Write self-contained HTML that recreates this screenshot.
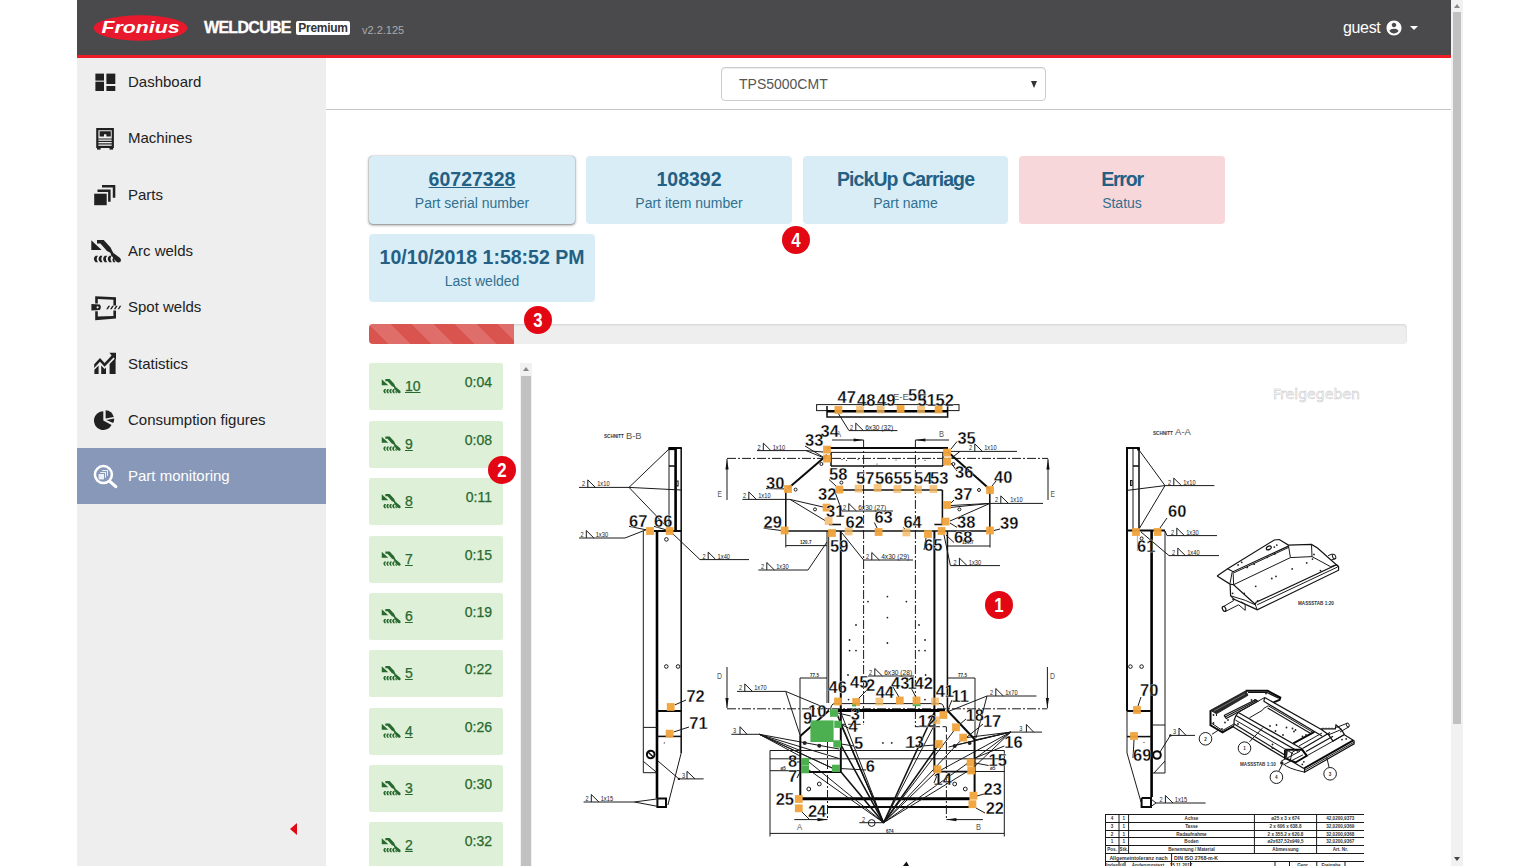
<!DOCTYPE html>
<html lang="en">
<head>
<meta charset="utf-8">
<title>WeldCube Premium - Part monitoring</title>
<style>
*{box-sizing:border-box;margin:0;padding:0}
html,body{width:1540px;height:866px;overflow:hidden;background:#fff;font-family:"Liberation Sans",sans-serif;color:#212121}
#app{position:absolute;left:77px;top:0;width:1386px;height:866px;overflow:hidden;background:#fff}
#hdr{position:absolute;left:0;top:0;width:1374px;height:58px;background:#4a4a4c;border-bottom:3px solid #ee1c25;z-index:5}
#hdr .logo{position:absolute;left:16px;top:15px;width:95px;height:26px}
#hdr .brand{position:absolute;left:127px;top:18px;font-size:16px;font-weight:bold;color:#fff;letter-spacing:-0.7px;line-height:20px;-webkit-text-stroke:.3px #fff}
#hdr .prem{position:absolute;left:219px;top:21px;width:54px;height:14px;background:#fff;color:#333;border-radius:2px;font-size:12px;font-weight:bold;line-height:14px;text-align:center;letter-spacing:-0.3px}
#hdr .ver{position:absolute;left:285px;top:24px;font-size:11px;color:#aaa;line-height:13px}
#hdr .user{position:absolute;left:1266px;top:18px;font-size:16px;color:#fff;line-height:20px;letter-spacing:-.35px}
#hdr svg.acc{position:absolute;left:1308px;top:19px}
#hdr .caret{position:absolute;left:1333px;top:26px;width:0;height:0;border-left:4px solid transparent;border-right:4px solid transparent;border-top:4.5px solid #fff}
#side{position:absolute;left:0;top:54px;width:249px;height:812px;background:#eee}
#side .it{position:absolute;left:0;width:249px;height:56.3px;font-size:15px;line-height:55.800px;color:#212121;padding-left:51px;white-space:nowrap}
#side .it.act{background:#8898b9;color:#fff}
#side .it svg{position:absolute;left:14px;top:16px;width:28px;height:24px}
#side .coll{position:absolute;left:212.800px;top:768.500px;width:0;height:0;border-top:6.7px solid transparent;border-bottom:6.7px solid transparent;border-right:7.5px solid #e30613}
#topbar{position:absolute;left:249px;top:58px;width:1125px;height:52px;border-bottom:1px solid #c4c4c4;background:#fff}
#sel{position:absolute;left:395px;top:9px;width:325px;height:34px;border:1px solid #ccc;border-radius:4px;font-size:14px;color:#555;line-height:32px;padding-left:17px;box-shadow:inset 0 1px 1px rgba(0,0,0,.075)}
#sel:after{content:"";position:absolute;right:8px;top:13px;border-left:3.5px solid transparent;border-right:3.5px solid transparent;border-top:7px solid #333}
.card{position:absolute;height:68px;border-radius:4px;background:#d9edf7;color:#31708f;text-align:center}
.card b{display:block;font-size:19.5px;line-height:22px;margin-top:12px;color:#245f84;white-space:nowrap}
.card span{display:block;font-size:14px;line-height:16px;margin-top:5px;color:#31708f}
.card.err{background:#f8d7da}
.card.first{box-shadow:0 1px 3px rgba(0,0,0,.5),0 0 1px rgba(0,0,0,.45)}
.card.first b{text-decoration:underline}
#prog{position:absolute;left:292px;top:324px;width:1038px;height:19.500px;border-radius:4px;background:#eee;box-shadow:inset 0 1px 2px rgba(0,0,0,.12);overflow:hidden}
#prog i{display:block;width:145px;height:20px;background-color:#d9534f;background-image:linear-gradient(45deg,rgba(255,255,255,.15) 25%,transparent 25%,transparent 50%,rgba(255,255,255,.15) 50%,rgba(255,255,255,.15) 75%,transparent 75%,transparent);background-size:43px 43px}
.badge{position:absolute;width:28px;height:28px;border-radius:50%;background:#e30613;color:#fff;font-weight:bold;font-size:21px;line-height:28px;text-align:center;z-index:4;font-family:"Liberation Sans",sans-serif}
.badge s{display:inline-block;text-decoration:none;transform:scaleX(.8)}
.w{position:absolute;left:292px;width:134px;height:47px;background:#dff0d8;color:#27692f;font-size:14px;border-radius:2px}
.w u{position:absolute;left:36px;top:14px;line-height:18px}
.w em{position:absolute;right:11px;top:10px;font-style:normal;line-height:18px}
.w{-webkit-text-stroke:.25px #27692f}
.w svg{position:absolute;left:12px;top:14px}
#isb{position:absolute;left:443px;top:363px;width:12px;height:503px;background:#f1f1f1}
#isb i{position:absolute;left:1px;top:13px;width:10px;height:490px;background:#c1c1c1}
#isb:before{content:"";position:absolute;left:3px;top:4px;border-left:3px solid transparent;border-right:3px solid transparent;border-bottom:4px solid #888}
#vsb{position:absolute;left:1374px;top:0;width:12px;height:866px;background:#f1f1f1}
#vsb i{position:absolute;left:2px;top:12px;width:8px;height:712px;background:#c1c1c1}
#vsb:before{content:"";position:absolute;left:3px;top:4px;border-left:3px solid transparent;border-right:3px solid transparent;border-bottom:4px solid #888}
#vsb:after{content:"";position:absolute;left:3px;top:857px;border-left:3px solid transparent;border-right:3px solid transparent;border-top:4px solid #444}
#draw,#icons{position:absolute;left:-77px;top:0;width:1540px;height:866px;z-index:1;pointer-events:none}
#icons{z-index:3}
</style>
</head>
<body>
<div id="app">
<svg id="draw" viewBox="0 0 1540 866">
<style>
.t{fill:none;stroke:#1a1a1a;stroke-width:1}
.m{fill:none;stroke:#111;stroke-width:1.55}
.k{fill:none;stroke:#0a0a0a;stroke-width:2}
.x{fill:none;stroke:#000;stroke-width:3}
.k2{fill:none;stroke:#000;stroke-width:2.6}
.i{fill:none;stroke:#111;stroke-width:1.2}
.g{fill:none;stroke:#777;stroke-width:.6}
.dd{stroke-dasharray:9 2 2 2}
.ds{stroke-dasharray:5 2.5}
.fd{fill:#222;stroke:none}
.fa{fill:#111;stroke:none}
.mo{fill:#f0a33a;opacity:.95}
.ml{fill:#f4b660;opacity:.8}
.mg{fill:#4caf50}
.lb{font:bold 16.5px "Liberation Sans",sans-serif;fill:#0a0a0a;stroke:#fff;stroke-width:.35;stroke-opacity:.9}
.ws{font:7.3px "Liberation Sans",sans-serif;fill:#222}
.tn{font:bold 4.6px "Liberation Sans",sans-serif;fill:#333}
.sc{font:9.5px "Liberation Sans",sans-serif;fill:#555}
.tb{font:bold 4.6px "Liberation Sans",sans-serif;fill:#333;text-anchor:middle}
</style>
<text class="tn" x="604" y="438.4">SCHNITT</text>
<text class="sc" x="626" y="438.6" textLength="15.6" lengthAdjust="spacingAndGlyphs">B-B</text>
<path class="t" d="M669 448 L669 531"/>
<path class="k2" d="M675.6 448 L675.6 531"/>
<path class="m" d="M681.2 448 L681.2 753"/>
<path class="k" d="M668.6 448 L681.8 448"/>
<path class="x" d="M668.6 448.6 L675.6 448.6"/>
<path class="m" d="M669 466 L675.6 466"/>
<rect class="t" x="676.5" y="481" width="1.6" height="5"/>
<path class="t" d="M579 487.4 L629 487.4"/>
<path class="t" d="M629 487.4 L669 449"/>
<path class="t" d="M629 487.4 L681 490"/>
<path class="t" d="M629 487.4 L668 528"/>
<text class="ws" x="582" y="486.3" textLength="3.1" lengthAdjust="spacingAndGlyphs">2</text>
<path class="t" d="M587.8 487.4 L587.8 479.9 L595.4 487.4"/>
<text class="ws" x="597.2" y="486.3" textLength="12.4" lengthAdjust="spacingAndGlyphs">1x10</text>
<path class="t" d="M629 526.3 L646 529.8"/>
<path class="t" d="M654 526.3 L666 529.8"/>
<path class="t" d="M579 538 L625 538"/>
<path class="t" d="M625 538 L646 529.8"/>
<text class="ws" x="580.5" y="536.9" textLength="3.1" lengthAdjust="spacingAndGlyphs">2</text>
<path class="t" d="M586.3 538 L586.3 530.5 L593.9 538"/>
<text class="ws" x="595.7" y="536.9" textLength="12.4" lengthAdjust="spacingAndGlyphs">1x30</text>
<path class="k" d="M654 531 L681.2 531"/>
<path class="t" d="M643.3 531 L643.3 772.7"/>
<path class="k2" d="M657 531 L657 798.4"/>
<circle class="t" cx="666.4" cy="539.4" r="1.8"/>
<circle class="t" cx="666.3" cy="666.5" r="1.8"/>
<circle class="t" cx="678" cy="666.5" r="1.8"/>
<path class="t" d="M672 533 L700 559.6 L749 559.6"/>
<text class="ws" x="702.4" y="558.5" textLength="3.1" lengthAdjust="spacingAndGlyphs">2</text>
<path class="t" d="M708.2 559.6 L708.2 552.1 L715.8 559.6"/>
<text class="ws" x="717.6" y="558.5" textLength="12.4" lengthAdjust="spacingAndGlyphs">1x40</text>
<path class="k" d="M657 711 L681.2 711"/>
<path class="m" d="M657 736.4 L681.2 736.4"/>
<path class="t" d="M643.3 727.4 L657 727.4"/>
<path class="t" d="M686 700 L674.6 705"/>
<path class="t" d="M689 727 L673.6 732"/>
<path class="t" d="M681.2 753 L667.9 805"/>
<path class="t" d="M643.3 772.7 L657 772.7"/>
<path class="t" d="M643.3 761.3 L657 772.7"/>
<circle class="k" cx="650.7" cy="754.5" r="3.8"/>
<path class="m" d="M648 752 L653.5 757.2"/>
<path class="k" d="M657.4 798.4 L666 798.4 L666 807 L657.4 807 L657.4 798.4"/>
<path class="t" d="M657.5 760.6 L678.9 778.9 L703.6 778.9"/>
<circle class="fd" cx="678.9" cy="778.9" r="1.2"/>
<text class="ws" x="682" y="777.7" textLength="3.1" lengthAdjust="spacingAndGlyphs">3</text>
<path class="t" d="M687 778.9 L687 771.3 L695 778.9"/>
<path class="t" d="M583.6 802 L634.3 802"/>
<path class="t" d="M634.3 802 L657.4 798.9"/>
<path class="t" d="M634.3 802 L657.4 806.3"/>
<text class="ws" x="585.5" y="800.9" textLength="3.1" lengthAdjust="spacingAndGlyphs">2</text>
<path class="t" d="M591.3 802 L591.3 794.5 L598.9 802"/>
<text class="ws" x="600.7" y="800.9" textLength="12.4" lengthAdjust="spacingAndGlyphs">1x15</text>
<circle class="fd" cx="664.3" cy="742.9" r="0.6"/>
<rect class="t" x="816.6" y="404.6" width="142.4" height="6"/>
<path class="m" d="M827 406 L827 417 L947.6 417 L947.6 406"/>
<path class="k2" d="M827 411.2 L947.6 411.2"/>
<path class="t" d="M838 413 L849 430.6 L897.4 430.6"/>
<text class="ws" x="850" y="429.5" textLength="3.1" lengthAdjust="spacingAndGlyphs">2</text>
<path class="t" d="M855.8 430.6 L855.8 423.1 L863.4 430.6"/>
<text class="ws" x="865.2" y="429.5" textLength="27.9" lengthAdjust="spacingAndGlyphs">6x30 (32)</text>
<text class="sc" x="893" y="400">E-E</text>
<text class="sc" x="836" y="436.6" textLength="5.2" lengthAdjust="spacingAndGlyphs">A</text>
<path class="t" d="M832 440 L863.6 440"/>
<path class="fa" d="M863.6 440 L853.6 441.6 L853.6 438.4 Z"/>
<path class="t dd" d="M863.6 440 L863.6 724"/>
<text class="sc" x="939" y="436.6" textLength="5" lengthAdjust="spacingAndGlyphs">B</text>
<path class="t" d="M915.4 440 L949 440"/>
<path class="fa" d="M915.4 440 L925.4 438.4 L925.4 441.6 Z"/>
<path class="t dd" d="M915.4 440 L915.4 727"/>
<path class="k" d="M827 448 L948 448"/>
<path class="t" d="M831 452.4 L948 452.4"/>
<path class="m" d="M831 452.4 L831 466"/>
<path class="m" d="M831 466 L943 466"/>
<path class="m" d="M943 452.4 L943 466"/>
<path class="t dd" d="M727 458.4 L1048 458.4"/>
<path class="t" d="M727 459 L727 500"/>
<path class="fa" d="M727 459.5 L728.6 469.5 L725.4 469.5 Z"/>
<text class="sc" x="717.5" y="497" textLength="4.4" lengthAdjust="spacingAndGlyphs">E</text>
<path class="t" d="M1048 459 L1048 500"/>
<path class="fa" d="M1048 459.5 L1049.6 469.5 L1046.4 469.5 Z"/>
<text class="sc" x="1050.5" y="497" textLength="4.4" lengthAdjust="spacingAndGlyphs">E</text>
<path class="k" d="M948 452 L990 489.5"/>
<path class="k" d="M827 455 L788 488.6"/>
<path class="m" d="M989.8 490 L989.8 531"/>
<path class="m" d="M785.8 489 L785.8 531"/>
<path class="m" d="M839 490 L942.4 490"/>
<path class="m" d="M942.4 490 L942.4 524.5"/>
<path class="m" d="M829 524.5 L841 524.5"/>
<path class="m" d="M934.4 524.5 L942.4 524.5"/>
<path class="t" d="M835 492 L842 511 L893 511"/>
<text class="ws" x="843" y="509.9" textLength="3.1" lengthAdjust="spacingAndGlyphs">2</text>
<path class="t" d="M848.8 511 L848.8 503.5 L856.4 511"/>
<text class="ws" x="858.2" y="509.9" textLength="27.9" lengthAdjust="spacingAndGlyphs">6x30 (27)</text>
<circle class="t" cx="821.4" cy="464" r="1.5"/>
<circle class="t" cx="953.4" cy="464" r="1.5"/>
<circle class="t" cx="815" cy="509.4" r="1.5"/>
<circle class="t" cx="959.4" cy="509.4" r="1.5"/>
<circle class="t" cx="841.4" cy="482.6" r="1.5"/>
<circle class="t" cx="979" cy="490" r="1.5"/>
<circle class="t" cx="795.6" cy="489.6" r="1.5"/>
<circle class="fd" cx="842" cy="459.5" r="0.6"/>
<circle class="fd" cx="846.5" cy="460.5" r="0.6"/>
<circle class="fd" cx="858" cy="459.5" r="0.6"/>
<circle class="fd" cx="896" cy="460" r="0.6"/>
<circle class="fd" cx="918" cy="459.5" r="0.6"/>
<circle class="fd" cx="925" cy="460.5" r="0.6"/>
<circle class="fd" cx="877" cy="464" r="0.6"/>
<path class="m" d="M785 531 L990 531"/>
<path class="t" d="M960 451.4 L1017 451.4"/>
<path class="t" d="M960 451.4 L951 451.4"/>
<path class="t" d="M960 451.4 L951 458.5"/>
<text class="ws" x="969" y="450.3" textLength="3.1" lengthAdjust="spacingAndGlyphs">2</text>
<path class="t" d="M974.8 451.4 L974.8 443.9 L982.4 451.4"/>
<text class="ws" x="984.2" y="450.3" textLength="12.4" lengthAdjust="spacingAndGlyphs">1x10</text>
<path class="t" d="M990 503.4 L1043 503.4"/>
<path class="t" d="M990 503.4 L951 505.5"/>
<path class="t" d="M990 503.4 L950 521"/>
<path class="t" d="M990 503.4 L949 507.6"/>
<text class="ws" x="995" y="502.3" textLength="3.1" lengthAdjust="spacingAndGlyphs">2</text>
<path class="t" d="M1000.8 503.4 L1000.8 495.9 L1008.4 503.4"/>
<text class="ws" x="1010.2" y="502.3" textLength="12.4" lengthAdjust="spacingAndGlyphs">1x10</text>
<path class="t" d="M757 450.6 L806 450.6"/>
<path class="t" d="M806 450.6 L823 457.5"/>
<path class="t" d="M806 450.6 L823 452"/>
<text class="ws" x="757.5" y="449.5" textLength="3.1" lengthAdjust="spacingAndGlyphs">2</text>
<path class="t" d="M763.3 450.6 L763.3 443.1 L770.9 450.6"/>
<text class="ws" x="772.7" y="449.5" textLength="12.4" lengthAdjust="spacingAndGlyphs">1x10</text>
<path class="t" d="M805 446 L823 457"/>
<path class="t" d="M742.4 499.4 L790 499.4"/>
<path class="t" d="M790 499.4 L823 507"/>
<path class="t" d="M790 499.4 L825 520.5"/>
<text class="ws" x="743" y="498.3" textLength="3.1" lengthAdjust="spacingAndGlyphs">2</text>
<path class="t" d="M748.8 499.4 L748.8 491.9 L756.4 499.4"/>
<text class="ws" x="758.2" y="498.3" textLength="12.4" lengthAdjust="spacingAndGlyphs">1x10</text>
<path class="t" d="M957 441.5 L951 449"/>
<path class="t" d="M957 471 L951 463"/>
<path class="t" d="M996 481 L992 486"/>
<path class="t" d="M763.6 528.2 L781 530.5"/>
<path class="t" d="M766 488.6 L784 488.9"/>
<path class="t" d="M829 479.5 L836 486"/>
<path class="t" d="M954 500 L951 503"/>
<path class="t" d="M957 527.4 L950 523"/>
<path class="t" d="M1000 529 L994 530.5"/>
<path class="t" d="M954 542.5 L946 535"/>
<path class="t" d="M924 550 L926 538"/>
<path class="t" d="M874.4 522.5 L877 528"/>
<path class="t" d="M903.4 527.5 L905 529"/>
<path class="t" d="M827 531 L827 703"/>
<path class="t" d="M828.7 531 L828.7 703"/>
<path class="k" d="M840.8 531 L840.8 772"/>
<path class="k" d="M934.4 531 L934.4 772"/>
<path class="m" d="M947.4 531 L947.4 710"/>
<path class="t" d="M758.4 570 L808 570"/>
<path class="t" d="M808 570 L827 542"/>
<text class="ws" x="761" y="568.9" textLength="3.1" lengthAdjust="spacingAndGlyphs">2</text>
<path class="t" d="M766.8 570 L766.8 562.5 L774.4 570"/>
<text class="ws" x="776.2" y="568.9" textLength="12.4" lengthAdjust="spacingAndGlyphs">1x30</text>
<path class="t" d="M785.8 545.6 L827 545.6"/>
<path class="t" d="M785.8 531 L785.8 547.5"/>
<text class="tn" x="800" y="544">120.7</text>
<path class="t" d="M842 533 L863.6 560 L913 560"/>
<text class="ws" x="866" y="558.9" textLength="3.1" lengthAdjust="spacingAndGlyphs">2</text>
<path class="t" d="M871.8 560 L871.8 552.5 L879.4 560"/>
<text class="ws" x="881.2" y="558.9" textLength="27.9" lengthAdjust="spacingAndGlyphs">4x30 (29)</text>
<path class="t" d="M944 535 L950.4 565.6 L1000 565.6"/>
<text class="ws" x="953.6" y="564.5" textLength="3.1" lengthAdjust="spacingAndGlyphs">2</text>
<path class="t" d="M959.4 565.6 L959.4 558.1 L967 565.6"/>
<text class="ws" x="968.8" y="564.5" textLength="12.4" lengthAdjust="spacingAndGlyphs">1x30</text>
<path class="t" d="M947.6 546 L990 546"/>
<path class="t" d="M990 531 L990 547.5"/>
<text class="tn" x="962" y="544.4" fill="#999">120.7</text>
<path class="t" d="M868 676 L914 676"/>
<text class="ws" x="869" y="674.9" textLength="3.1" lengthAdjust="spacingAndGlyphs">2</text>
<path class="t" d="M874.8 676 L874.8 668.5 L882.4 676"/>
<text class="ws" x="884.2" y="674.9" textLength="27.9" lengthAdjust="spacingAndGlyphs">6x30 (28)</text>
<circle class="fd" cx="868" cy="601.6" r="0.9"/>
<circle class="fd" cx="887.4" cy="596.6" r="0.9"/>
<circle class="fd" cx="906.4" cy="601.6" r="0.9"/>
<circle class="fd" cx="887.4" cy="617.6" r="0.9"/>
<circle class="fd" cx="856" cy="625" r="0.9"/>
<circle class="fd" cx="919" cy="625" r="0.9"/>
<circle class="fd" cx="849.6" cy="640" r="0.9"/>
<circle class="fd" cx="925" cy="640" r="0.9"/>
<circle class="fd" cx="887.4" cy="643" r="0.9"/>
<circle class="fd" cx="849.6" cy="650.6" r="0.9"/>
<circle class="fd" cx="856" cy="650.6" r="0.9"/>
<circle class="fd" cx="919" cy="650.6" r="0.9"/>
<circle class="fd" cx="925" cy="650.6" r="0.9"/>
<circle class="fd" cx="848" cy="675" r="0.9"/>
<circle class="fd" cx="925.6" cy="675" r="0.9"/>
<circle class="fd" cx="882.9" cy="742.9" r="0.9"/>
<circle class="fd" cx="891.7" cy="742.9" r="0.9"/>
<circle class="fd" cx="848.6" cy="699.6" r="0.9"/>
<circle class="fd" cx="925" cy="699.6" r="0.9"/>
<path class="t" d="M800 678 L827 678"/>
<path class="t" d="M800 678 L800 736"/>
<text class="tn" x="810" y="676.6">77.5</text>
<path class="t" d="M947.6 678 L975 678"/>
<path class="t" d="M975 678 L975 739"/>
<text class="tn" x="958" y="676.6">77.5</text>
<text class="sc" x="717" y="678.5" fill="#888" textLength="5" lengthAdjust="spacingAndGlyphs">D</text>
<path class="t" d="M727 667 L727 708"/>
<path class="fa" d="M727 708 L725.4 698 L728.6 698 Z"/>
<path class="t dd" d="M727 708.8 L1047.4 708.8"/>
<path class="t" d="M1047.4 667 L1047.4 708"/>
<path class="fa" d="M1047.4 708 L1045.8 698 L1049 698 Z"/>
<text class="sc" x="1050" y="678.5" fill="#888" textLength="5" lengthAdjust="spacingAndGlyphs">D</text>
<path class="t" d="M737 691.4 L785.7 691.4"/>
<text class="ws" x="739" y="690.3" textLength="3.1" lengthAdjust="spacingAndGlyphs">2</text>
<path class="t" d="M744.8 691.4 L744.8 683.9 L752.4 691.4"/>
<text class="ws" x="754.2" y="690.3" textLength="12.4" lengthAdjust="spacingAndGlyphs">1x70</text>
<path class="t" d="M785.7 691.4 L800 735"/>
<path class="t" d="M785.7 691.4 L829 709.5"/>
<path class="t" d="M987 696 L1036.4 696"/>
<text class="ws" x="990" y="694.9" textLength="3.1" lengthAdjust="spacingAndGlyphs">2</text>
<path class="t" d="M995.8 696 L995.8 688.5 L1003.4 696"/>
<text class="ws" x="1005.2" y="694.9" textLength="12.4" lengthAdjust="spacingAndGlyphs">1x70</text>
<path class="t" d="M987 696 L947 712"/>
<path class="t" d="M987 696 L976 738"/>
<path class="t" d="M731.4 734.3 L759.3 734.3"/>
<text class="ws" x="733" y="733.2" textLength="3.1" lengthAdjust="spacingAndGlyphs">3</text>
<path class="t" d="M740 734.3 L740 726.7 L747 734.3"/>
<path class="t" d="M759.3 734.3 L800.7 750.7"/>
<path class="t" d="M759.3 734.3 L839 749"/>
<path class="t" d="M759.3 734.3 L839.3 758.6"/>
<path class="t" d="M759.3 734.3 L800.7 756.4"/>
<path class="t" d="M759.3 734.3 L832 768"/>
<path class="t" d="M759.3 734.3 L841 772"/>
<path class="t" d="M1010.7 732.1 L1042 732.1"/>
<text class="ws" x="1019.3" y="731" textLength="3.1" lengthAdjust="spacingAndGlyphs">3</text>
<path class="t" d="M1026.4 732.1 L1026.4 724.5 L1033.6 732.1"/>
<path class="t" d="M1010.7 732.1 L975 740"/>
<path class="t" d="M1010.7 732.1 L975 758.6"/>
<path class="t" d="M1010.7 732.1 L948.6 747"/>
<path class="t" d="M1010.7 732.1 L971 770"/>
<path class="t" d="M1010.7 732.1 L941 770"/>
<path class="t" d="M1010.7 732.1 L963 738"/>
<path class="t" d="M1010.7 732.1 L956 745"/>
<path class="t" d="M830.7 710 Q830.7 703.6 835 703.6 L940 703.6 Q944 703.6 944 710"/>
<path class="x" d="M838 710.4 L945 710.4"/>
<path class="k" d="M800.3 736 L829 710.4"/>
<path class="k" d="M947 710 L974.6 739.3"/>
<path class="k" d="M800.3 736 L800.3 795.6"/>
<path class="k" d="M974.6 739 L974.6 792"/>
<path class="k" d="M800.3 772 L841 772"/>
<path class="m" d="M934.4 771.6 L974.6 771.6"/>
<path class="t" d="M770 836.5 L770 750.5 L1004.3 750.5 L1004.3 836.5"/>
<path class="t" d="M770 758.8 L1004.3 758.8"/>
<path class="t" d="M770 770.7 L800 770.7"/>
<path class="t" d="M975 771.5 L1004.3 771.5"/>
<path class="t" d="M770 833.4 L1004.3 833.4"/>
<text class="tn" x="886" y="832.6">674</text>
<text class="tn" x="780.5" y="769.5">ø5</text>
<text class="tn" x="990" y="769.5" fill="#999">ø5</text>
<path class="x" d="M802 798.8 L969.7 798.8"/>
<path class="k" d="M828 807 L969 807"/>
<path class="t dd" d="M827.5 745 L827.5 819.6"/>
<path class="t" d="M794.3 819.6 L827.5 819.6"/>
<path class="fa" d="M827.5 819.6 L817.5 821.2 L817.5 818 Z"/>
<text class="sc" x="797" y="830" textLength="5.2" lengthAdjust="spacingAndGlyphs">A</text>
<path class="t dd" d="M946.4 745 L946.4 819.6"/>
<path class="t" d="M946.4 819.6 L982.9 819.6"/>
<path class="fa" d="M946.4 819.6 L956.4 818 L956.4 821.2 Z"/>
<text class="sc" x="976" y="830" textLength="5" lengthAdjust="spacingAndGlyphs">B</text>
<path class="t ds" d="M840.7 724.3 L863.6 724.3"/>
<path class="t ds" d="M915 726.7 L935 726.7"/>
<path class="t ds" d="M946.4 727 L946.4 745"/>
<path class="t ds" d="M935 726.7 L946.4 726.7"/>
<path class="t ds" d="M827.5 727 L827.5 745"/>
<circle class="fd" cx="804.7" cy="742.9" r="2"/>
<circle class="fd" cx="819.3" cy="745.7" r="2"/>
<circle class="fd" cx="954.7" cy="746" r="2"/>
<circle class="fd" cx="969.6" cy="742.9" r="2"/>
<circle class="t" cx="819.3" cy="784" r="1.9"/>
<circle class="t" cx="808.8" cy="789" r="1.9"/>
<circle class="t" cx="954.7" cy="784" r="1.9"/>
<circle class="t" cx="965.3" cy="789" r="1.9"/>
<path class="t" d="M859.3 822.7 L883.6 822.7"/>
<text class="ws" x="862" y="821.5" textLength="3.1" lengthAdjust="spacingAndGlyphs">2</text>
<circle class="t" cx="871.7" cy="823" r="3.4"/>
<path class="t" d="M883.6 822.7 L841 713"/>
<path class="t" d="M883.6 822.7 L841 725"/>
<path class="m" d="M883.6 822.7 L841 745"/>
<path class="m" d="M883.6 822.7 L841 772"/>
<path class="t" d="M883.6 822.7 L809 762"/>
<path class="t" d="M883.6 822.7 L809 770"/>
<path class="m" d="M883.6 822.7 L836 712"/>
<path class="m" d="M883.6 822.7 L934 713"/>
<path class="t" d="M883.6 822.7 L937 720"/>
<path class="m" d="M883.6 822.7 L939 744"/>
<path class="t" d="M883.6 822.7 L938 770"/>
<path class="t" d="M883.6 822.7 L956 728"/>
<path class="t" d="M883.6 822.7 L963 738"/>
<path class="t" d="M883.6 822.7 L968 763"/>
<path class="t" d="M883.6 822.7 L968 771"/>
<path class="t" d="M976 808 L985 813"/>
<path class="t" d="M977 796 L984 794"/>
<path class="t" d="M802 812 L809 819"/>
<path class="t" d="M850.7 716 L838 713"/>
<path class="t" d="M848.6 728 L841 724.5"/>
<path class="t" d="M854 746 L841 744"/>
<path class="t" d="M866 770 L840 768.5"/>
<path class="t" d="M797 762 L801 762"/>
<path class="t" d="M797 778 L801 770"/>
<path class="t" d="M811 722 L815 726"/>
<path class="t" d="M905.7 747.2 L935 745"/>
<path class="t" d="M988.6 765.5 L975 763"/>
<path class="t" d="M1004.3 746 L975 758"/>
<path class="t" d="M983 724 L967 737"/>
<path class="t" d="M966 719 L959 725"/>
<path class="t" d="M934 783 L938 773"/>
<path class="t" d="M952 700 L947 712"/>
<path class="t" d="M868 689 L858 699"/>
<path class="t" d="M893 687 L899 697"/>
<path class="t" d="M911 688 L916 697"/>
<path class="fa" d="M903 866 L906.5 861.5 L909 866Z"/>
<text class="tn" x="1153" y="435">SCHNITT</text>
<text class="sc" x="1175" y="435.2" textLength="16" lengthAdjust="spacingAndGlyphs">A-A</text>
<path class="k" d="M1127 447.5 L1127 711"/>
<path class="t" d="M1133 448 L1133 531"/>
<path class="m" d="M1139 448 L1139 531"/>
<path class="k" d="M1126 448 L1139.6 448"/>
<path class="x" d="M1137.2 449 L1139.8 449"/>
<path class="m" d="M1133 466 L1139 466"/>
<rect class="t" x="1130.5" y="480.5" width="1.6" height="5"/>
<path class="t" d="M1165 485.6 L1214.4 485.6"/>
<path class="t" d="M1165 485.6 L1139 450"/>
<path class="t" d="M1165 485.6 L1127 490.4"/>
<path class="t" d="M1165 485.6 L1139 529"/>
<text class="ws" x="1168" y="484.5" textLength="3.1" lengthAdjust="spacingAndGlyphs">2</text>
<path class="t" d="M1173.8 485.6 L1173.8 478.1 L1181.4 485.6"/>
<text class="ws" x="1183.2" y="484.5" textLength="12.4" lengthAdjust="spacingAndGlyphs">1x10</text>
<path class="t" d="M1167 518 L1160 528"/>
<path class="k" d="M1127 530.6 L1165 530.6"/>
<path class="t" d="M1165 531 L1167 535.6 L1217 535.6"/>
<text class="ws" x="1171" y="534.5" textLength="3.1" lengthAdjust="spacingAndGlyphs">2</text>
<path class="t" d="M1176.8 535.6 L1176.8 528.1 L1184.4 535.6"/>
<text class="ws" x="1186.2" y="534.5" textLength="12.4" lengthAdjust="spacingAndGlyphs">1x30</text>
<path class="t" d="M1141 532 L1169 555.6 L1219 555.6"/>
<text class="ws" x="1172" y="554.5" textLength="3.1" lengthAdjust="spacingAndGlyphs">2</text>
<path class="t" d="M1177.8 555.6 L1177.8 548.1 L1185.4 555.6"/>
<text class="ws" x="1187.2" y="554.5" textLength="12.4" lengthAdjust="spacingAndGlyphs">1x40</text>
<circle class="t" cx="1141.6" cy="538.4" r="1.5"/>
<path class="g" d="M1137.4 536 L1137.4 551"/>
<path class="k2" d="M1151.6 531 L1151.6 797"/>
<path class="t" d="M1165 531 L1165 773"/>
<circle class="t" cx="1130.4" cy="666.6" r="1.8"/>
<circle class="t" cx="1141.6" cy="666.6" r="1.8"/>
<path class="t" d="M1141 697 L1138 706"/>
<path class="k" d="M1127 711 L1151.6 711"/>
<path class="m" d="M1127 736.6 L1151.6 736.6"/>
<path class="t" d="M1134 740 L1133 758"/>
<path class="t" d="M1127 711 L1127 753"/>
<path class="t" d="M1127 753 L1141 802"/>
<path class="t" d="M1151.6 725 L1165 725"/>
<path class="t" d="M1151.6 773 L1165 773"/>
<path class="t" d="M1165 761 L1154 773"/>
<circle class="k" cx="1157" cy="755" r="3.8"/>
<path class="t" d="M1160 752 L1170.4 735.4 L1195 735.4"/>
<circle class="fd" cx="1170.4" cy="735.4" r="1.2"/>
<text class="ws" x="1173" y="734.2" textLength="3.1" lengthAdjust="spacingAndGlyphs">3</text>
<path class="t" d="M1179 735.4 L1179 728 L1186 735.4"/>
<path class="k" d="M1141.6 798 L1151 798 L1151 807 L1141.6 807 L1141.6 798"/>
<path class="t" d="M1151 799 L1156 803 L1151 806.5"/>
<path class="t" d="M1156 803 L1205.6 803"/>
<text class="ws" x="1159.6" y="801.9" textLength="3.1" lengthAdjust="spacingAndGlyphs">2</text>
<path class="t" d="M1165.4 803 L1165.4 795.5 L1173 803"/>
<text class="ws" x="1174.8" y="801.9" textLength="12.4" lengthAdjust="spacingAndGlyphs">1x15</text>
<circle class="fd" cx="1144" cy="742.5" r="0.6"/>
<text x="1273" y="399" textLength="87" lengthAdjust="spacingAndGlyphs" style="font:13.5px 'DejaVu Sans',sans-serif;fill:#fff;stroke:#c6c6c6;stroke-width:.5">Freigegeben</text>
<path class="i" d="M1217.1 576 L1227.6 568.7 L1274.3 540 L1279.3 539.5 L1288.4 545.1 L1311.5 544.4 L1317.5 548.1 L1338.6 566.7 L1338.6 570.2 L1257.2 609.9 L1253.2 607.9 L1234.1 599.3 L1230.6 595.8 L1230.1 584.2 L1217.1 576"/>
<path class="i" d="M1227.6 568.7 L1233.1 571.7 L1288.4 546.1"/>
<path class="t" d="M1234.1 572.7 L1288.9 547.3"/>
<path class="t" d="M1233.1 571.7 L1233.6 584.7 L1290.4 557.6 L1288.4 545.1"/>
<path class="t" d="M1290.4 557.6 L1312 556.6 L1311.5 544.4"/>
<path class="t" d="M1312 556.6 L1330.6 566.7 L1336.6 564.7"/>
<path class="i" d="M1230.1 584.2 L1233.6 584.7 L1255.2 604.3 L1256.2 602.3 L1336.6 564.7 L1338.6 566.7"/>
<path class="t" d="M1257.2 604.8 L1337.6 567"/>
<path class="t" d="M1255.2 604.3 L1257.2 609.9"/>
<path class="t" d="M1230.6 595.8 L1245.2 600.3 L1255.2 604.8"/>
<path class="t" d="M1230.1 583.2 L1232.1 572.2"/>
<path class="t" d="M1223.6 606.5 L1234.1 600.3"/>
<path class="t" d="M1225.1 611.6 L1238.7 604.8"/>
<path class="t" d="M1238.7 604.8 L1245.2 610.4 L1245.2 604.3 L1241.2 601.8"/>
<path class="t" d="M1232.1 599.3 L1235.1 599.3"/>
<ellipse class="i" cx="1224.1" cy="608.9" rx="1.6" ry="2.6" transform="rotate(-25 1224.1 608.9)"/>
<path class="t" d="M1328.1 555.6 L1332.6 553.9"/>
<path class="t" d="M1331.1 560.1 L1335.6 558.6"/>
<ellipse class="t" cx="1334.1" cy="556.6" rx="1.5" ry="2.4" transform="rotate(-25 1334.1 556.6)"/>
<ellipse class="i" cx="1268.8" cy="547.9" rx="2.6" ry="1.7" transform="rotate(-28 1268.8 547.9)"/>
<circle class="fd" cx="1255.7" cy="586.3" r="0.9"/>
<circle class="fd" cx="1271.8" cy="578.5" r="0.9"/>
<circle class="fd" cx="1276" cy="576.4" r="0.9"/>
<circle class="fd" cx="1292.2" cy="568.9" r="0.9"/>
<circle class="fd" cx="1306.7" cy="562.9" r="0.9"/>
<circle class="fd" cx="1320.5" cy="570.7" r="0.9"/>
<circle class="fd" cx="1257.7" cy="600.8" r="0.9"/>
<circle class="fd" cx="1238.1" cy="565" r="0.9"/>
<circle class="fd" cx="1241.7" cy="562.3" r="0.9"/>
<circle class="fd" cx="1274.3" cy="547.1" r="0.9"/>
<circle class="fd" cx="1276.8" cy="545.1" r="0.9"/>
<circle class="fd" cx="1244.2" cy="593.3" r="0.9"/>
<circle class="fd" cx="1232.6" cy="593.3" r="0.9"/>
<circle class="fd" cx="1314" cy="554.4" r="0.9"/>
<circle class="fd" cx="1312.5" cy="559.1" r="0.9"/>
<circle class="fd" cx="1247.2" cy="567.4" r="0.9"/>
<circle class="fd" cx="1254.2" cy="564.2" r="0.9"/>
<circle class="fd" cx="1267.3" cy="557.3" r="0.9"/>
<circle class="fd" cx="1274.8" cy="553.9" r="0.9"/>
<text class="tn" x="1298" y="605.4">MASSSTAB 1:20</text>
<path d="M1210.5 710.3 L1245.8 690.8 L1248 695.3 L1216.5 713.8 Z" fill="#2a2a2a" stroke="#111" stroke-width=".8"/>
<path class="g" d="M1213 711.6 L1246.6 693" style="stroke:#bbb;stroke-width:.5"/>
<path class="k" d="M1210.5 710.3 L1210.5 725.3 L1222.5 732.4 L1233.8 726"/>
<path class="t" d="M1211.3 723 L1222.5 730.5 L1233 724.5"/>
<path class="t" d="M1216.5 713.8 L1216.5 716"/>
<path class="k" d="M1245.8 690.8 L1267.6 690.8 L1280.3 697.5 L1279.6 699.8 L1273.6 702.4"/>
<path class="i" d="M1248 692.3 L1266.5 692.3 L1278.8 698.3"/>
<path class="i" d="M1224 715.5 L1255.6 699.8 L1257.8 701.3 L1226.3 718.5 L1224 715.5"/>
<path class="i" d="M1225 717 L1256.7 700.5"/>
<path class="i" d="M1238.3 712.5 L1302.9 749.3"/>
<path class="i" d="M1236 715.5 L1298.3 751.6"/>
<path class="t" d="M1235.3 720 L1293.1 753.8"/>
<path class="i" d="M1233.8 723.8 L1284.8 755"/>
<path class="i" d="M1233 726.8 L1285 758.3"/>
<path class="i" d="M1238.3 712.5 L1236 715.5 L1234.2 720 L1233.8 726"/>
<path class="i" d="M1264.6 697.5 L1320.5 729"/>
<path class="i" d="M1263.8 701.3 L1322 736"/>
<path class="t" d="M1268.3 705.8 L1313.8 732.8"/>
<path class="i" d="M1267.6 708 L1311.6 734"/>
<path class="i" d="M1264.6 697.5 L1263.8 701.3"/>
<path class="t" d="M1264.6 697.5 L1238.3 712.5"/>
<path class="t" d="M1268.3 705.8 L1263.8 708.3 L1262.3 710.3 L1249.5 717.8"/>
<path class="k" d="M1293.3 743.4 L1314.3 731.8"/>
<path class="i" d="M1303 748.3 L1330 732.5"/>
<path class="i" d="M1306 751.6 L1333 736.3"/>
<path class="t" d="M1299 746 L1322 733"/>
<path class="k" d="M1285 749.8 L1302.3 749.8 L1306.8 755.8 L1295.5 762.5 L1290.3 760.3 L1285 758 L1285 749.8"/>
<path class="t" d="M1281.3 761 L1300 751.3"/>
<path class="t" d="M1283.5 764.8 L1303 754.8"/>
<path class="t" d="M1290.3 760.3 L1292 752.5 L1296 750"/>
<circle class="fd" cx="1281.8" cy="762.9" r="1.7"/>
<path d="M1285 749.800 L1288 749.800 L1287 757 L1285 758 Z" fill="#222"/>
<path class="i" d="M1320.3 728.8 L1335.3 728.8 L1336 725 L1341.3 729.5 L1344.3 734.4 L1333 741.1 L1328.6 734.8 L1320.3 728.8"/>
<path class="t" d="M1328.6 734.8 L1341.3 729.5"/>
<path class="t" d="M1336.3 727.5 L1346.8 723.4"/>
<path class="t" d="M1340 732 L1349 726.8"/>
<ellipse class="t" cx="1347.8" cy="725" rx="1.3" ry="2" transform="rotate(-28 1347.8 725)"/>
<circle class="fd" cx="1323" cy="728" r="0.6"/>
<circle class="fd" cx="1326" cy="728" r="0.6"/>
<circle class="fd" cx="1329" cy="728" r="0.6"/>
<circle class="fd" cx="1332" cy="728" r="0.6"/>
<path class="i" d="M1344.3 734.8 L1354.1 740.8 L1354.1 743.8 L1304.5 772.3 L1304.5 768.5"/>
<path class="k" d="M1353.3 740.4 L1303.8 768.5"/>
<path class="t" d="M1354.1 742.2 L1304.5 770.3"/>
<path class="i" d="M1290.3 760.3 L1303.8 768.5"/>
<path class="t" d="M1283.5 764 Q1288 768.5 1304 772"/>
<path class="t" d="M1306.8 755.8 L1344.3 734.8"/>
<circle class="fd" cx="1342" cy="739.6" r="0.9"/>
<circle class="fd" cx="1346.2" cy="738.9" r="0.9"/>
<circle class="fd" cx="1303.8" cy="761.8" r="0.9"/>
<circle class="fd" cx="1302.3" cy="764.4" r="0.9"/>
<circle class="fd" cx="1213.5" cy="715" r="0.9"/>
<circle class="fd" cx="1213.5" cy="723" r="0.9"/>
<circle class="fd" cx="1225" cy="722.5" r="0.9"/>
<circle class="fd" cx="1228" cy="720" r="0.9"/>
<circle class="fd" cx="1238" cy="724" r="0.9"/>
<circle class="fd" cx="1246" cy="693.5" r="0.9"/>
<circle class="fd" cx="1266" cy="693.5" r="0.9"/>
<circle class="fd" cx="1251.5" cy="700" r="0.9"/>
<circle class="fd" cx="1255" cy="700" r="0.9"/>
<circle class="fd" cx="1270" cy="726" r="0.9"/>
<circle class="fd" cx="1276.5" cy="725" r="0.9"/>
<circle class="fd" cx="1275.5" cy="731" r="0.9"/>
<circle class="fd" cx="1283" cy="735" r="0.9"/>
<circle class="fd" cx="1286.5" cy="727.5" r="0.9"/>
<circle class="fd" cx="1292.5" cy="728.5" r="0.9"/>
<circle class="fd" cx="1294" cy="731.5" r="0.9"/>
<circle class="fd" cx="1295.5" cy="730" r="0.9"/>
<circle class="fd" cx="1302.5" cy="736.5" r="0.9"/>
<circle class="fd" cx="1306" cy="735" r="0.9"/>
<circle class="fd" cx="1272.5" cy="744.5" r="0.9"/>
<circle class="fd" cx="1272.5" cy="748" r="0.9"/>
<circle class="fd" cx="1222" cy="729" r="0.9"/>
<circle class="fd" cx="1213" cy="711" r="0.9"/>
<circle class="t" cx="1205.5" cy="738.8" r="6.3"/>
<text class="tb" x="1205.5" y="740.6">2</text>
<path class="t" d="M1212 734.3 L1218.8 729.8"/>
<circle class="t" cx="1244.5" cy="748.2" r="6.3"/>
<text class="tb" x="1244.5" y="750">1</text>
<path class="t" d="M1249.5 741.8 L1263 727.5"/>
<circle class="t" cx="1276.4" cy="777.2" r="6.3"/>
<text class="tb" x="1276.4" y="779">4</text>
<path class="t" d="M1279 770.8 L1282.4 764"/>
<circle class="t" cx="1330.1" cy="773.8" r="6.3"/>
<text class="tb" x="1330.1" y="775.6">3</text>
<path class="t" d="M1329 767 L1326.7 757.3"/>
<text class="tn" x="1240" y="766">MASSSTAB 1:10</text>
<path class="t" d="M1105 814.5 L1364 814.5"/>
<path class="t" d="M1105 822.5 L1364 822.5"/>
<path class="t" d="M1105 830.5 L1364 830.5"/>
<path class="t" d="M1105 837.5 L1364 837.5"/>
<path class="t" d="M1105 845.5 L1364 845.5"/>
<path class="t" d="M1105 853.5 L1364 853.5"/>
<path class="t" d="M1105 861.5 L1364 861.5"/>
<path class="t" d="M1105.5 814 L1105.5 853.5"/>
<path class="t" d="M1119 814 L1119 853.5"/>
<path class="t" d="M1128.6 814 L1128.6 853.5"/>
<path class="t" d="M1254.4 814 L1254.4 853.5"/>
<path class="t" d="M1316.6 814 L1316.6 853.5"/>
<path class="t" d="M1105.5 853.5 L1105.5 866"/>
<path class="t" d="M1171.6 853.5 L1171.6 866"/>
<path class="t" d="M1119 861.5 L1119 866"/>
<path class="t" d="M1125 861.5 L1125 866"/>
<path class="t" d="M1190.5 861.5 L1190.5 866"/>
<path class="t" d="M1275 861.5 L1275 866"/>
<path class="t" d="M1289.5 861.5 L1289.5 866"/>
<path class="t" d="M1316.8 861.5 L1316.8 866"/>
<path class="t" d="M1345 861.5 L1345 866"/>
<text class="tb" x="1112" y="820.3">4</text>
<text class="tb" x="1123.8" y="820.3">1</text>
<text class="tb" x="1191.5" y="820.3">Achse</text>
<text class="tb" x="1285.5" y="820.3">ø25 x 3 x 674</text>
<text class="tb" x="1340.3" y="820.3">42,0200,9373</text>
<text class="tb" x="1112" y="828.2">3</text>
<text class="tb" x="1123.8" y="828.2">1</text>
<text class="tb" x="1191.5" y="828.2">Tasse</text>
<text class="tb" x="1285.5" y="828.2">2 x 606 x 638.8</text>
<text class="tb" x="1340.3" y="828.2">32,0200,9369</text>
<text class="tb" x="1112" y="835.8">2</text>
<text class="tb" x="1123.8" y="835.8">1</text>
<text class="tb" x="1191.5" y="835.8">Radaufnahme</text>
<text class="tb" x="1285.5" y="835.8">2 x 355.2 x 620.8</text>
<text class="tb" x="1340.3" y="835.8">32,0200,9368</text>
<text class="tb" x="1112" y="843.1">1</text>
<text class="tb" x="1123.8" y="843.1">1</text>
<text class="tb" x="1191.5" y="843.1">Boden</text>
<text class="tb" x="1285.5" y="843.1">ø2x637,52x949,5</text>
<text class="tb" x="1340.3" y="843.1">32,0200,9367</text>
<text class="tb" x="1112" y="850.9">Pos.</text>
<text class="tb" x="1123.8" y="850.9">Stk.</text>
<text class="tb" x="1191.5" y="850.9">Benennung / Material</text>
<text class="tb" x="1285.5" y="850.9">Abmessung</text>
<text class="tb" x="1340.3" y="850.9">Art. Nr.</text>
<text class="tb" x="1138.5" y="859.8" style="font-size:5.2px">Allgemeintoleranz nach</text>
<text class="tn" x="1174" y="859.8" style="font-size:5.2px">DIN ISO 2768-m-K</text>
<text class="tb" x="1112" y="867.3">Index</text>
<text class="tb" x="1122" y="867.3">ül</text>
<text class="tb" x="1148" y="867.3">Änderungstext</text>
<text class="tb" x="1181" y="867.3">15.11.2017</text>
<text class="tb" x="1303" y="867.3">Gepr.</text>
<text class="tb" x="1331" y="867.3">Freigabe</text>
<rect class="mo" x="646.1" y="527.1" width="7.8" height="7.8"/>
<rect class="mo" x="665.7" y="527.1" width="7.8" height="7.8"/>
<rect class="mo" x="666.8" y="703.1" width="7.8" height="7.8"/>
<rect class="mo" x="665.7" y="729.8" width="7.8" height="7.8"/>
<rect class="mo" x="834.5" y="406.1" width="7.8" height="7.8"/>
<rect class="ml" x="856.1" y="405.6" width="7.8" height="7.8"/>
<rect class="ml" x="876.7" y="405.6" width="7.8" height="7.8"/>
<rect class="mo" x="896.7" y="405.1" width="7.8" height="7.8"/>
<rect class="ml" x="917.1" y="405.6" width="7.8" height="7.8"/>
<rect class="mo" x="934.7" y="405.6" width="7.8" height="7.8"/>
<rect class="mo" x="823.1" y="445.7" width="7.8" height="7.8"/>
<rect class="mo" x="823.1" y="454.7" width="7.8" height="7.8"/>
<rect class="mo" x="943.1" y="448.7" width="7.8" height="7.8"/>
<rect class="mo" x="943.1" y="457.7" width="7.8" height="7.8"/>
<rect class="mo" x="986.1" y="486.1" width="7.8" height="7.8"/>
<rect class="mo" x="784.1" y="485.1" width="7.8" height="7.8"/>
<rect class="mo" x="780.7" y="526.6" width="7.8" height="7.8"/>
<rect class="mo" x="986.1" y="526.6" width="7.8" height="7.8"/>
<rect class="mo" x="835.5" y="485.7" width="7.8" height="7.8"/>
<rect class="ml" x="854.7" y="484.7" width="7.8" height="7.8"/>
<rect class="ml" x="873.7" y="484.1" width="7.8" height="7.8"/>
<rect class="ml" x="893.5" y="485.1" width="7.8" height="7.8"/>
<rect class="ml" x="914.1" y="485.6" width="7.8" height="7.8"/>
<rect class="ml" x="929.5" y="485.1" width="7.8" height="7.8"/>
<rect class="mo" x="822.7" y="503.7" width="7.8" height="7.8"/>
<rect class="ml" x="824.7" y="517.1" width="7.8" height="7.8"/>
<rect class="mo" x="943.1" y="501.1" width="7.8" height="7.8"/>
<rect class="mo" x="941.7" y="517.7" width="7.8" height="7.8"/>
<rect class="mo" x="937.7" y="527.1" width="7.8" height="7.8"/>
<rect class="mo" x="924.1" y="530.1" width="7.8" height="7.8"/>
<rect class="ml" x="902.5" y="528.5" width="7.8" height="7.8"/>
<rect class="mo" x="874.7" y="528.1" width="7.8" height="7.8"/>
<rect class="ml" x="844.7" y="527.5" width="7.8" height="7.8"/>
<rect class="mo" x="828.1" y="529.1" width="7.8" height="7.8"/>
<rect class="mo" x="834.1" y="697.6" width="7.8" height="7.8"/>
<rect class="mo" x="852.3" y="698.1" width="7.8" height="7.8"/>
<rect class="ml" x="875.5" y="697.6" width="7.8" height="7.8"/>
<rect class="mo" x="895.9" y="696.6" width="7.8" height="7.8"/>
<rect class="mo" x="912.6" y="696.6" width="7.8" height="7.8"/>
<rect class="ml" x="931.1" y="697.6" width="7.8" height="7.8"/>
<rect class="mo" x="939.5" y="711.1" width="7.8" height="7.8"/>
<rect class="ml" x="932.5" y="716.4" width="7.8" height="7.8"/>
<rect class="mo" x="952.1" y="723.4" width="7.8" height="7.8"/>
<rect class="mo" x="959.3" y="733.7" width="7.8" height="7.8"/>
<rect class="mo" x="934.8" y="740.1" width="7.8" height="7.8"/>
<rect class="mo" x="933.6" y="765.4" width="7.8" height="7.8"/>
<rect class="mo" x="966.7" y="758.6" width="7.8" height="7.8"/>
<rect class="mo" x="967.3" y="766.6" width="7.8" height="7.8"/>
<rect class="mo" x="794.9" y="795.1" width="7.8" height="7.8"/>
<rect class="mo" x="794.9" y="804.4" width="7.8" height="7.8"/>
<rect class="mo" x="969.5" y="791.8" width="7.8" height="7.8"/>
<rect class="mo" x="968.5" y="800.3" width="7.8" height="7.8"/>
<rect class="mo" x="1132.1" y="528.1" width="7.8" height="7.8"/>
<rect class="mo" x="1153.7" y="528.1" width="7.8" height="7.8"/>
<rect class="mo" x="1133.1" y="706.1" width="7.8" height="7.8"/>
<rect class="mo" x="1130.1" y="732.1" width="7.8" height="7.8"/>
<rect class="mg" x="852" y="704.5" width="4" height="2"/><rect class="mg" x="912.6" y="704.3" width="8" height="1.8"/>
<rect class="mg" x="830" y="709.3" width="8" height="7.5"/>
<rect class="mg" x="810.4" y="720.4" width="23.2" height="21.6"/>
<rect class="mg" x="834.3" y="720.7" width="7.2" height="7.2"/>
<rect class="mg" x="833.3" y="740.3" width="7.7" height="7.3"/>
<rect class="mg" x="801" y="757.9" width="8" height="7.8"/>
<rect class="mg" x="801" y="766" width="8" height="7.3"/>
<rect class="mg" x="831.9" y="764.7" width="8.1" height="7.3"/>
<text class="lb" x="629" y="526.8">67</text>
<text class="lb" x="654" y="526.8">66</text>
<text class="lb" x="686.4" y="702.2">72</text>
<text class="lb" x="689.3" y="728.7">71</text>
<text class="lb" x="837.6" y="402.8">47</text>
<text class="lb" x="857" y="405.8">48</text>
<text class="lb" x="877" y="405.8">49</text>
<text class="lb" x="908" y="400.8">50</text>
<text class="lb" x="917.6" y="405.8">51</text>
<text class="lb" x="935.5" y="405.8">52</text>
<text class="lb" x="820.6" y="437.2">34</text>
<text class="lb" x="805" y="445.8">33</text>
<text class="lb" x="957.4" y="443.8">35</text>
<text class="lb" x="955" y="477.8">36</text>
<text class="lb" x="994" y="483.4">40</text>
<text class="lb" x="766" y="488.8">30</text>
<text class="lb" x="763.6" y="528.4">29</text>
<text class="lb" x="829" y="479.8">58</text>
<text class="lb" x="856" y="484.2">57</text>
<text class="lb" x="875" y="484.2">56</text>
<text class="lb" x="893.6" y="484.2">55</text>
<text class="lb" x="914" y="484.2">54</text>
<text class="lb" x="930" y="484.2">53</text>
<text class="lb" x="818" y="500.2">32</text>
<text class="lb" x="826" y="516.8">31</text>
<text class="lb" x="954" y="500.2">37</text>
<text class="lb" x="957" y="527.8">38</text>
<text class="lb" x="1000" y="529.4">39</text>
<text class="lb" x="954" y="542.8">68</text>
<text class="lb" x="924" y="550.8">65</text>
<text class="lb" x="903.4" y="527.8">64</text>
<text class="lb" x="874.4" y="522.8">63</text>
<text class="lb" x="845.6" y="527.8">62</text>
<text class="lb" x="830" y="551.8">59</text>
<text class="lb" x="828.6" y="692.8">46</text>
<text class="lb" x="850" y="687.8">45</text>
<text class="lb" x="866" y="690.8">2</text>
<text class="lb" x="875.7" y="697.8">44</text>
<text class="lb" x="891" y="689.4">43</text>
<text class="lb" x="907.5" y="688.8">1</text>
<text class="lb" x="914.5" y="688.8">42</text>
<text class="lb" x="935.7" y="696.5">41</text>
<text class="lb" x="951.4" y="702.2">11</text>
<text class="lb" x="965.7" y="720.8">18</text>
<text class="lb" x="982.9" y="726.5">17</text>
<text class="lb" x="1004.3" y="747.8">16</text>
<text class="lb" x="988.6" y="765.8">15</text>
<text class="lb" x="933.6" y="785.1">14</text>
<text class="lb" x="905.7" y="747.5">13</text>
<text class="lb" x="917.9" y="726.5">12</text>
<text class="lb" x="983.6" y="794.8">23</text>
<text class="lb" x="985.7" y="813.5">22</text>
<text class="lb" x="808" y="716.5">10</text>
<text class="lb" x="803" y="723.8">9</text>
<text class="lb" x="850.7" y="719.8">3</text>
<text class="lb" x="848.6" y="732.2">4</text>
<text class="lb" x="854" y="748.8">5</text>
<text class="lb" x="865.7" y="772.2">6</text>
<text class="lb" x="788" y="766.5">8</text>
<text class="lb" x="788" y="781.5">7</text>
<text class="lb" x="775.7" y="804.8">25</text>
<text class="lb" x="807.9" y="817.1">24</text>
<text class="lb" x="1168" y="516.8">60</text>
<text class="lb" x="1137" y="551.8">61</text>
<text class="lb" x="1140" y="695.8">70</text>
<text class="lb" x="1133" y="760.8">69</text>
</svg>
<div id="side">
<div class="it" style="top:0px">Dashboard</div>
<div class="it" style="top:56.3px">Machines</div>
<div class="it" style="top:112.6px">Parts</div>
<div class="it" style="top:168.9px">Arc welds</div>
<div class="it" style="top:225.2px">Spot welds</div>
<div class="it" style="top:281.5px">Statistics</div>
<div class="it" style="top:337.8px">Consumption figures</div>
<div class="it act" style="top:394.1px">Part monitoring</div>
<div class="coll"></div>
</div>
<svg id="icons" viewBox="0 0 1540 866">
<defs>
<g id="arc">
<path d="M0.5 0.2 L0.5 9.9 L10.8 9.9 Z"/>
<path d="M6.200 0.100 L12.900 0.100 L19.8 7.600 L21.4 11 L22.6 13 L21 13.800 L19.2 12.4 L16.2 11 L9.600 3.600 L6.200 3.600 Z"/>
<path d="M20.800 12.2 L23.2 13.400 L29 17.800 Q31.2 20.400 29.400 22 Q27.400 23.200 25.100 21.200 L20.400 15.200 L19.600 13 Z"/>
<path d="M4.800 15.800 Q1.400 19 4.800 22.200 L7.200 22.200 Q4.600 19 7.200 15.800 Z M9.400 15.800 Q6 19 9.400 22.200 L11.800 22.200 Q9.200 19 11.800 15.800 Z M14 15.800 Q10.600 19 14 22.200 L16.400 22.200 Q13.800 19 16.400 15.800 Z M18.600 15.800 Q15.200 19 18.600 22.200 L21 22.200 Q18.400 19 21 15.800 Z M22.800 17.400 Q20.600 19.600 22.600 22.200 L24.600 22.200 Q22.800 20 24 18.400 Z"/>
</g>
</defs>
<g fill="#212121">
<!-- dashboard -->
<rect x="95.4" y="73.6" width="8.6" height="7"/><rect x="95.4" y="81.7" width="8.6" height="9.3"/><rect x="106.4" y="73.6" width="8.9" height="10.4"/><rect x="106.4" y="86" width="8.9" height="5"/>
<!-- machines -->
<path fill-rule="evenodd" d="M96.2 128.1 H113.9 V148 H96.2 Z M98.4 130.300 V138.4 H111.7 V130.300 Z"/>
<path fill-rule="evenodd" d="M99.6 131.2 H110.800 V136.4 H106.4 V134.2 H104 V136.4 H99.6 Z"/>
<rect x="98.4" y="139.5" width="13.3" height="1.3" fill="#eee"/><rect x="98.4" y="142" width="13.3" height="1.3" fill="#eee"/><rect x="98.4" y="144.5" width="13.3" height="1.3" fill="#eee"/>
<rect x="97" y="148" width="3.6" height="1.6"/><rect x="109.5" y="148" width="3.6" height="1.6"/>
<!-- parts -->
<rect x="94.2" y="193.7" width="12.5" height="11.5"/>
<path d="M97.5 189.6 H110.6 V201.8 H108.100 V192.1 H97.5 Z"/><path d="M102 185 H115.3 V197.7 H112.8 V187.5 H102 Z"/>
<!-- arc welds -->
<use href="#arc" x="90.8" y="240"/>
<!-- spot welds -->
<path d="M95.2 296.2 L116 297.3 V305.4 H113.4 V299.8 L97.8 299 V303.6 H95.2 Z M95.2 311.2 H97.8 V316.6 L113.4 316 V310.6 H116 V318.4 L95.2 320.2 Z"/>
<path fill-rule="evenodd" d="M91.4 304 L99.8 304.6 Q102 307.3 99.8 310 L91.4 310.6 Z M97.6 306.2 A1.1 1.1 0 1 0 97.6 308.4 A1.1 1.1 0 1 0 97.6 306.2 Z"/>
<path d="M106.2 309.2 L108.4 305.8 L110.1 305.8 L107.9 309.2 Z M110 309.2 L112.2 305.8 L113.9 305.8 L111.7 309.2 Z M113.8 309.2 L116 305.8 L117.7 305.8 L115.5 309.2 Z M117.6 309.2 L119.8 305.8 L121.300 305.8 L119.100 309.2 Z"/>
<!-- statistics -->
<path d="M94.2 364.2 L100 358 L104.6 363 L111.6 355.600 L109.4 352.7 H116 V359.8 L113.5 357.4 L104.6 366.8 L100 361.8 L94.2 368 Z"/>
<path d="M94.4 369.8 L98.6 365.4 V374.1 H94.4 Z M101.2 365.4 L104.6 369 L106 367.6 V374.1 H101.2 Z M109.6 364 L115.6 357.8 V374.1 H109.6 Z"/>
<!-- consumption -->
<path d="M103.3 420.6 L103.3 411.2 A9.4 9.4 0 1 0 111.600 425 Z"/>
<path d="M105.6 418.4 L105.6 410.2 A8.400 8.400 0 0 1 113.800 417.100 Z"/>
<path d="M106.2 420 L114.2 418.6 A8.400 8.400 0 0 1 113.2 423 Z"/>
</g>
<!-- part monitoring -->
<g fill="none" stroke="#fff">
<circle cx="103.4" cy="474.6" r="8.5" stroke-width="2.5"/>
<path d="M109.8 481.4 L115.8 486.6" stroke-width="3.2" stroke-linecap="round"/>
</g>
<g fill="#fff" opacity=".85"><rect x="98.6" y="474" width="5.4" height="5.400"/><path d="M100.2 472 H106 V477.8 H105 V473 H100.2 Z M102.2 470 H108 V475.8 H107 V471 H102.2 Z"/></g>
<!-- weld list icons -->
<g fill="#27692f">
<use href="#arc" transform="translate(381.4 379.0) scale(.64)"/>
<use href="#arc" transform="translate(381.4 436.5) scale(.64)"/>
<use href="#arc" transform="translate(381.4 494.0) scale(.64)"/>
<use href="#arc" transform="translate(381.4 551.5) scale(.64)"/>
<use href="#arc" transform="translate(381.4 609.0) scale(.64)"/>
<use href="#arc" transform="translate(381.4 666.0) scale(.64)"/>
<use href="#arc" transform="translate(381.4 723.5) scale(.64)"/>
<use href="#arc" transform="translate(381.4 781.0) scale(.64)"/>
<use href="#arc" transform="translate(381.4 838.0) scale(.64)"/>
</g>
</svg>
<div id="topbar"><div id="sel">TPS5000CMT</div></div>
<div class="card first" style="left:292px;top:156px;width:206px"><b>60727328</b><span>Part serial number</span></div>
<div class="card" style="left:509px;top:156px;width:206px"><b>108392</b><span>Part item number</span></div>
<div class="card" style="left:726px;top:156px;width:205px"><b style="letter-spacing:-.9px">PickUp Carriage</b><span>Part name</span></div>
<div class="card err" style="left:942px;top:156px;width:206px"><b style="letter-spacing:-1.2px">Error</b><span>Status</span></div>
<div class="card" style="left:292px;top:234px;width:226px"><b>10/10/2018 1:58:52 PM</b><span>Last welded</span></div>
<div id="prog"><i></i></div>
<div class="badge" style="left:705px;top:226px"><s>4</s></div>
<div class="badge" style="left:447px;top:306px"><s>3</s></div>
<div class="badge" style="left:411px;top:456px"><s>2</s></div>
<div class="badge" style="left:908px;top:591px"><s>1</s></div>
<div class="w" style="top:363px"><u>10</u><em>0:04</em></div>
<div class="w" style="top:420.5px"><u>9</u><em>0:08</em></div>
<div class="w" style="top:478px"><u>8</u><em>0:11</em></div>
<div class="w" style="top:535.5px"><u>7</u><em>0:15</em></div>
<div class="w" style="top:593px"><u>6</u><em>0:19</em></div>
<div class="w" style="top:650px"><u>5</u><em>0:22</em></div>
<div class="w" style="top:707.5px"><u>4</u><em>0:26</em></div>
<div class="w" style="top:765px"><u>3</u><em>0:30</em></div>
<div class="w" style="top:822px"><u>2</u><em>0:32</em></div>
<div id="isb"><i></i></div>
<div id="hdr">
<svg class="logo" viewBox="0 0 95 26"><ellipse cx="47.5" cy="13" rx="47" ry="12.8" fill="#e8192c"/><text x="47.5" y="18.2" text-anchor="middle" font-family="Liberation Sans, sans-serif" font-weight="bold" font-style="italic" font-size="16.5" fill="#fff" textLength="78" lengthAdjust="spacingAndGlyphs">Fronius</text></svg>
<div class="brand">WELDCUBE</div><div class="prem">Premium</div><div class="ver">v2.2.125</div>
<div class="user">guest</div>
<svg class="acc" width="18" height="18" viewBox="0 0 24 24"><path fill="#fff" d="M12 2C6.48 2 2 6.48 2 12s4.48 10 10 10 10-4.480 10-10S17.520 2 12 2zm0 3c1.660 0 3 1.340 3 3s-1.340 3-3 3-3-1.340-3-3 1.340-3 3-3zm0 14.200c-2.500 0-4.710-1.280-6-3.220.030-1.990 4-3.080 6-3.080 1.990 0 5.970 1.090 6 3.080-1.290 1.940-3.500 3.220-6 3.220z"/></svg>
<div class="caret"></div>
</div>
<div id="vsb"><i></i></div>
</div>
</body>
</html>
